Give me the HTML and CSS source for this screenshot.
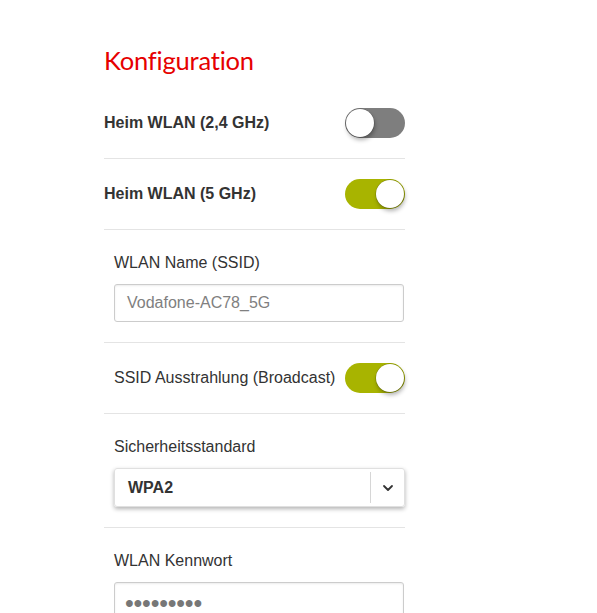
FILE: index.html
```html
<!DOCTYPE html>
<html lang="de">
<head>
<meta charset="utf-8">
<title>Konfiguration</title>
<link rel="stylesheet" href="styles.css">
</head>
<body>
<main class="page">
  <h1 class="title">Konfiguration</h1>

  <div class="row">
    <span class="row-label">Heim WLAN (2,4 GHz)</span>
    <span class="toggle"><span class="knob"></span></span>
  </div>

  <div class="row">
    <span class="row-label">Heim WLAN (5 GHz)</span>
    <span class="toggle on"><span class="knob"></span></span>
  </div>

  <div class="field">
    <div class="field-label">WLAN Name (SSID)</div>
    <div class="input"><span class="placeholder">Vodafone-AC78_5G</span></div>
  </div>

  <div class="row sub">
    <span class="sub-label">SSID Ausstrahlung (Broadcast)</span>
    <span class="toggle on"><span class="knob"></span></span>
  </div>

  <div class="field">
    <div class="field-label">Sicherheitsstandard</div>
    <div class="select">
      <span class="select-value">WPA2</span>
      <span class="select-arrow">
        <svg width="12" height="8" viewBox="0 0 12 8"><path d="M2 2 L6 6 L10 2" fill="none" stroke="#333" stroke-width="1.8" stroke-linecap="round" stroke-linejoin="round"/></svg>
      </span>
    </div>
  </div>

  <div class="field last">
    <div class="field-label">WLAN Kennwort</div>
    <div class="input"><span class="dots">•••••••••</span></div>
  </div>
</main>
</body>
</html>
```

FILE: styles.css
```css
html, body {
  margin: 0;
  padding: 0;
  background: #ffffff;
}

body {
  font-family: "Liberation Sans", Arial, sans-serif;
  color: #333333;
}

.page {
  width: 301px;
  padding: 0 0 0 104px;
}

.title {
  margin: 0;
  padding: 42px 0 30px;
  font-family: Lato, "Open Sans", sans-serif;
  font-weight: 400;
  font-size: 25.5px;
  line-height: 36px;
  letter-spacing: -0.2px;
  color: #e60000;
}

.row {
  display: flex;
  align-items: center;
  justify-content: space-between;
  padding: 20px 0;
  border-bottom: 1px solid #e4e4e4;
}

.row:first-of-type {
  padding-top: 0;
}

.row-label {
  font-weight: bold;
  font-size: 16px;
  color: #333333;
}

.row.sub {
  padding-left: 10px;
}

.sub-label {
  font-size: 16px;
  color: #333333;
}

.toggle {
  position: relative;
  width: 60px;
  height: 30px;
  border-radius: 15px;
  background: #7e7e7e;
  flex: none;
}

.toggle.on {
  background: #a8b400;
}

.knob {
  position: absolute;
  top: 1px;
  left: 1px;
  width: 28px;
  height: 28px;
  border-radius: 50%;
  background: #ffffff;
  box-shadow: 0 0 0 0.5px rgba(0, 0, 0, 0.25), 1px 3px 4px rgba(0, 0, 0, 0.3);
}

.toggle.on .knob {
  left: 31px;
}

.field {
  padding: 23px 0 20px 10px;
  border-bottom: 1px solid #e4e4e4;
}

.field.last {
  border-bottom: none;
}

.field-label {
  font-size: 16px;
  line-height: 20px;
  color: #333333;
  margin-bottom: 11px;
}

.input {
  box-sizing: border-box;
  height: 38px;
  width: 290px;
  border: 1px solid #cccccc;
  border-radius: 3px;
  box-shadow: inset 0 1px 2px rgba(0, 0, 0, 0.08);
  display: flex;
  align-items: center;
  padding: 0 12px;
}

.placeholder {
  font-size: 16px;
  color: #808080;
}

.dots {
  font-family: "Liberation Sans", sans-serif;
  font-size: 25px;
  line-height: 14px;
  letter-spacing: -0.2px;
  margin-left: -2px;
  margin-top: 4px;
  color: #777777;
}

.select {
  box-sizing: border-box;
  height: 39px;
  width: 291px;
  border: 1px solid #e0e0e0;
  border-radius: 3px;
  box-shadow: 0 2px 4px rgba(0, 0, 0, 0.3);
  display: flex;
  align-items: center;
}

.select-value {
  flex: 1;
  padding-left: 13px;
  font-weight: bold;
  font-size: 16px;
  color: #333333;
}

.select-arrow {
  width: 33px;
  height: 31px;
  border-left: 1px solid #d6d6d6;
  display: flex;
  align-items: center;
  justify-content: center;
}
```
